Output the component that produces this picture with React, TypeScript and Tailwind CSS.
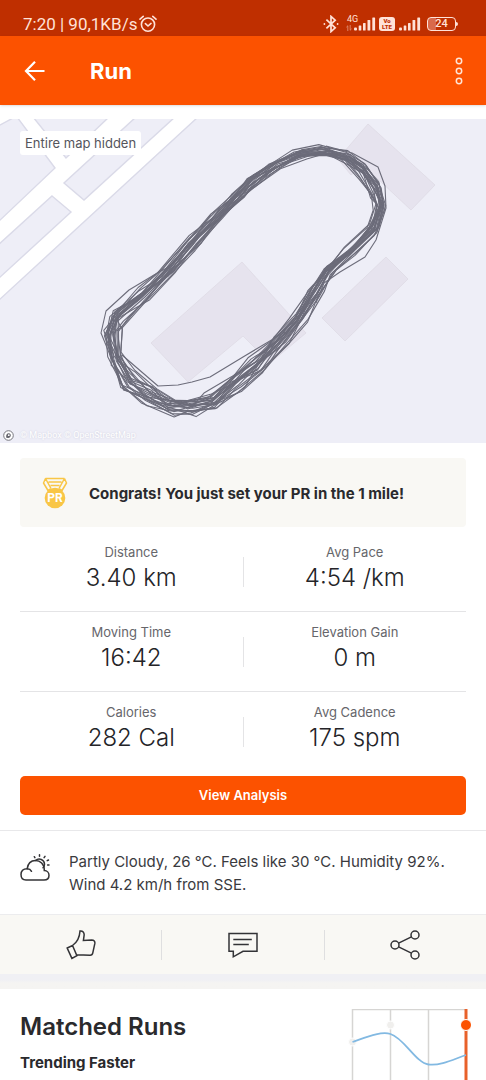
import type { ReactNode } from 'react';

interface Stat {
    label: string;
    value: string;
}

const statRows: Stat[][] = [
    [{ label: 'Distance', value: '3.40 km' }, { label: 'Avg Pace', value: '4:54 /km' }],
    [{ label: 'Moving Time', value: '16:42' }, { label: 'Elevation Gain', value: '0 m' }],
    [{ label: 'Calories', value: '282 Cal' }, { label: 'Avg Cadence', value: '175 spm' }],
];

// outer x, outer y, inner x, inner y around the track
const trackEdges = [
    [187, 119, 199, 129],
    [208, 95, 222, 104],
    [230, 73, 244, 82],
    [250, 56, 260, 65],
    [271, 41, 278, 53],
    [296, 30, 303, 41],
    [323, 26, 326, 39],
    [348, 31, 343, 44],
    [368, 44, 358, 59],
    [381, 65, 369, 76],
    [386, 88, 373, 88],
    [378, 113, 366, 106],
    [358, 136, 344, 128],
    [337, 153, 320, 149],
    [324, 174, 309, 169],
    [309, 205, 288, 196],
    [292, 228, 264, 220],
    [268, 252, 249, 237],
    [243, 274, 228, 255],
    [217, 293, 207, 271],
    [197, 299, 182, 278],
    [172, 299, 170, 273],
    [142, 289, 156, 264],
    [119, 273, 138, 249],
    [106, 244, 124, 233],
    [101, 214, 122, 214],
    [108, 192, 127, 205],
    [134, 170, 151, 183],
    [160, 150, 173, 159],
];

// Each lap keeps roughly to its own lane between the inner and outer edge
function buildLaps(count: number) {
    let seed = 29;
    const random = () => {
        seed = (seed * 16807) % 2147483647;
        return seed / 2147483647;
    };
    const laps: string[] = [];
    for (let lap = 0; lap < count; lap++) {
        const lane = lap / (count - 1);
        const points = trackEdges.map(([ox, oy, ix, iy], i) => {
            const t = lane * 0.6 + random() * 0.4;
            const next = trackEdges[(i + 1) % trackEdges.length];
            const along = (random() - 0.5) * 0.35;
            const x = ox + (ix - ox) * t + (next[0] - ox) * along;
            const y = oy + (iy - oy) * t + (next[1] - oy) * along;
            return `${x.toFixed(1)},${y.toFixed(1)}`;
        });
        laps.push(points.join(' '));
    }
    return laps;
}

const laps = buildLaps(22);

function Signal() {
    return (
        <svg width="22" height="14" viewBox="0 0 22 14" fill="currentColor" aria-hidden="true">
            <rect x="0" y="10.5" width="3" height="3" rx="1" />
            <rect x="4.7" y="8.5" width="2.6" height="5" rx="0.6" />
            <rect x="9" y="6" width="2.6" height="7.5" rx="0.6" />
            <rect x="13.5" y="3" width="2.8" height="10.5" rx="0.6" />
            <rect x="18.3" y="0.5" width="2.8" height="13" rx="0.6" />
        </svg>
    );
}

function StatusBar() {
    return (
        <div className="flex h-9 items-center justify-between bg-[#bf2f00] pt-3 pr-7 pl-[23px] font-[Roboto,sans-serif] text-[#ffe2d8]">
            <div className="flex items-center gap-0.5">
                <span className="text-[17px] leading-5">7:20 | 90,1KB/s</span>
                <svg width="18" height="18" viewBox="0 0 18 18" fill="none" stroke="currentColor" strokeWidth="1.6" strokeLinecap="round" aria-hidden="true">
                    <circle cx="9" cy="9.6" r="6.6" />
                    <path d="M1 4.2 4.2 1.4M17 4.2l-3.2-2.8M6.4 8.6 9 11l3-2.6" />
                </svg>
            </div>
            <div className="flex items-center">
                <svg width="16" height="18" viewBox="0 0 16 18" fill="none" stroke="currentColor" strokeWidth="1.7" aria-hidden="true">
                    <path d="m3.4 4.6 8.8 8.2L8 16.6V1.4l4.2 3.8-8.8 8.2" />
                    <circle cx="1.4" cy="9" r="0.9" fill="currentColor" stroke="none" />
                    <circle cx="14.6" cy="9" r="0.9" fill="currentColor" stroke="none" />
                </svg>
                <div className="relative ml-[15px]">
                    <span className="absolute -top-1 -left-[7px] text-[9px] leading-3">4G</span>
                    <svg className="absolute top-2 -left-2" width="6" height="6" viewBox="0 0 6 6" fill="none" stroke="currentColor" strokeWidth="0.8" opacity="0.6" aria-hidden="true">
                        <path d="M1.8 6V.8L.4 2.2M4.2 0v5.2l1.4-1.4" />
                    </svg>
                    <Signal />
                </div>
                <div className="ml-[3px] flex h-[14px] w-4 flex-col items-center justify-center rounded-[3px] bg-[#ffe2d8] text-[6px] leading-[6px] font-black text-[#bf2f00]">
                    <span>Vo</span>
                    <span>LTE</span>
                </div>
                <div className="ml-1">
                    <Signal />
                </div>
                <div className="ml-[6px] flex items-center">
                    <div className="flex h-[14px] w-[29px] items-center justify-center rounded border border-[#ffe2d8] bg-linear-to-r from-[#d9694a] from-28% to-transparent to-28% text-[11px] leading-3 font-medium">
                        24
                    </div>
                    <span className="h-1 w-0.5 rounded-r bg-[#ffe2d8]" />
                </div>
            </div>
        </div>
    );
}

function Header() {
    return (
        <header className="relative flex h-[69px] items-center bg-[#fc5200] pr-[23px] pl-6 text-white shadow-sm">
            <button type="button" aria-label="Back">
                <svg width="22" height="22" viewBox="0 0 22 22" fill="none" stroke="currentColor" strokeWidth="2.2">
                    <path d="M20.5 11H2.5M11 1.8 2 11l9 9.2" />
                </svg>
            </button>
            <h1 className="ml-11 flex-1 text-[22px] leading-7 font-bold">Run</h1>
            <button type="button" aria-label="More options">
                <svg width="8" height="28" viewBox="0 0 8 28" fill="none" stroke="#ffe4d6" strokeWidth="1.5">
                    <circle cx="4" cy="4" r="2.7" />
                    <circle cx="4" cy="14" r="2.7" />
                    <circle cx="4" cy="24" r="2.7" />
                </svg>
            </button>
        </header>
    );
}

function RouteMap() {
    return (
        <div className="relative mt-[14px]">
            <svg className="block h-auto w-full" viewBox="0 0 486 324" role="img" aria-label="Route map">
                <rect width="486" height="324" fill="#fff" />
                <g fill="#eeeef7" stroke="#dadae8" strokeWidth="1.4">
                    <path d="M198-2-2 182v144h490V-2z" />
                    <path d="M175-2 84 81 64 64l72-66z" />
                    <path d="M33-2 66 39l43-41z" />
                    <path d="m52 77 19 16-73 67v-34z" />
                    <path d="M-2 7 15-2h2l38 51-57 54z" />
                </g>
                <g fill="#e6e3ee" stroke="#dedae5" strokeWidth="0.8">
                    <path d="m368 5 67 61-24 25-48-45-12 10-13-16z" />
                    <path d="m386 138 22 22-63 62-23-23z" />
                    <path d="m242 143 64 71-36 30-27-27-55 46-37-39z" />
                </g>
                <g fill="none" stroke="#6c6c7a" strokeWidth="1.1" strokeLinejoin="round">
                    {laps.map((points, i) => (
                        <polygon key={i} points={points} />
                    ))}
                    <path d="M122 236l36 31 20-1 14-3 18-5 33-20 42-25" />
                    <path d="M326 27 352 34 378 48 385 67 386 89 376 121 365 138 340 153 324 164 316 184" />
                    <path d="M110 236 101 214 106 192 129 171 154 156 172 146" />
                </g>
            </svg>
            <span className="absolute top-3 left-5 rounded-[3px] bg-white px-[5px] text-[13px] leading-6 text-[#55555c]">
                Entire map hidden
            </span>
            <div className="absolute bottom-0.5 left-[3px] flex items-center gap-1.5">
                <svg width="11" height="11" viewBox="0 0 11 11" aria-hidden="true">
                    <circle cx="5.5" cy="5.5" r="4.8" fill="#fff" stroke="#77777f" />
                    <path d="M3.2 7.8c-.4-3 .6-4.6 2.5-4.6a2.1 2.1 0 0 1 1.8 3.2C6.6 8 5 8 3.2 7.8z" fill="#66666e" />
                    <circle cx="5.8" cy="5.2" r="0.9" fill="#fff" />
                </svg>
                <span className="font-[Roboto,sans-serif] text-[9px] leading-3 text-white [text-shadow:0_0_2px_#c9c9d8]">
                    © Mapbox © OpenStreetMap
                </span>
            </div>
        </div>
    );
}

function Medal() {
    return (
        <svg width="26" height="32" viewBox="0 0 26 32" fill="none" stroke="#f9c646" strokeWidth="1.5" strokeLinejoin="round" aria-hidden="true">
            <path d="M3.5 1.5h19M3.5 1.5 1.5 6l4.5 7.5 2.6-1.6M22.5 1.5l2 4.5-4.5 7.5-2.6-1.6M3.5 1.5l5.5 10M22.5 1.5 17 11.5M6.5 5h13M8.5 8.5h9" />
            <circle cx="13" cy="21" r="10.3" fill="#f9c646" stroke="none" />
            <text x="13" y="25" textAnchor="middle" fontSize="12" fontWeight="700" fontFamily="Roboto, sans-serif" fill="#fff" stroke="none">PR</text>
        </svg>
    );
}

function StatCell({ label, value }: Stat) {
    return (
        <div className="flex-1 pb-1.5 text-center">
            <dt className="text-[13px] leading-[18px] text-[#66666b]">{label}</dt>
            <dd className="text-2xl leading-[34px] font-light text-[#242428]">{value}</dd>
        </div>
    );
}

function ActionButton({ label, children }: { label: string; children: ReactNode }) {
    return (
        <button type="button" aria-label={label} className="flex h-[30px] flex-1 items-center justify-center">
            <svg width="30" height="30" viewBox="0 0 30 30" fill="none" stroke="#333336" strokeWidth="1.5">
                {children}
            </svg>
        </button>
    );
}

function TrendChart() {
    return (
        <svg width="124" height="71" viewBox="0 0 124 71" fill="none" role="img" aria-label="Matched runs trend">
            <path d="M5 .5h114M5.5 0v71M43.5 0v71M81.5 0v71" stroke="#d6d5d3" strokeWidth="1.5" />
            <path d="M119 0v71" stroke="#e8612a" strokeWidth="3" />
            <circle cx="5.5" cy="33" r="4" fill="#f0efed" stroke="#fff" />
            <circle cx="43.5" cy="16" r="4" fill="#f0efed" stroke="#fff" />
            <path d="M5.5 33C20 28 34 22 43.5 25 57 29 69 54 81.5 55.5 94 57 107 50 119 46" stroke="#82b9e2" strokeWidth="1.8" />
            <circle cx="119" cy="16" r="5.5" fill="#fc5200" stroke="#fff" />
        </svg>
    );
}

export default function App() {
    return (
        <div className="min-h-screen bg-white font-[Inter,'Noto_Sans_CJK_SC',sans-serif] text-[#2a2a2d]">
            <StatusBar />
            <Header />
            <main>
                <RouteMap />

                <section className="px-5 py-[15px]">
                    <div className="flex h-[69px] items-center rounded bg-[#f9f8f4] pl-[22px]">
                        <Medal />
                        <p className="ml-[21px] pt-0.5 text-[15px] leading-5 font-bold">
                            Congrats! You just set your PR in the 1 mile!
                        </p>
                    </div>

                    <div className="mt-[5px] divide-y divide-[#e4e4e6]">
                        {statRows.map((row) => (
                            <dl key={row[0].label} className="flex h-20 items-center">
                                <StatCell {...row[0]} />
                                <div className="h-[30px] w-px bg-[#e4e4e6]" />
                                <StatCell {...row[1]} />
                            </dl>
                        ))}
                    </div>

                    <button
                        type="button"
                        className="mt-1 block h-[39px] w-full rounded-[5px] bg-[#fc5200] text-[13px] font-semibold text-white"
                    >
                        View Analysis
                    </button>
                </section>

                <section className="flex items-start border-t border-[#e8e8ea] px-5 pt-[19px] pb-[18px]">
                    <svg className="mt-1 shrink-0" width="30" height="28" viewBox="0 0 30 28" fill="none" stroke="#333336" strokeWidth="1.5" strokeLinecap="round" aria-hidden="true">
                        <path d="M6 26h18c3 0 5-2 5-4.8 0-2.6-2-4.6-4.7-4.7C24.5 10 20 6.5 15.5 6.5c-4.3 0-7.6 3-8.3 8.2C3.5 14.8 1 17 1 20.5 1 24 3.2 26 6 26z" />
                        <path d="M7.2 14.7c2 .1 3.5 1 4.3 2.6M15.5 6.5c3.5-3.2 9-.8 9 3.7 0 1.6-.6 2.7-1.5 3.5" />
                        <path d="m14.3 2.7.6 1M19.5.8v1.4M25 2.3l-.9 1.4M28.5 6l-1.3.7M29 11h-1.4" />
                    </svg>
                    <p className="ml-[19px] text-[15px] leading-[23px] text-[#3a3a3e]">
                        Partly Cloudy, 26 ℃. Feels like 30 ℃. Humidity 92%. Wind 4.2 km/h from SSE.
                    </p>
                </section>

                <section className="flex h-[60px] items-center divide-x divide-[#dfdfe0] border-t border-[#ececee] bg-[#f9f8f4]">
                    <ActionButton label="Give kudos">
                        <path d="m1.2 18 5.3-2.5 4.4 10.2-5 2.7zM6.5 15.5c4.5-3 7-6.5 7.5-14.5 2.8-.4 4.400 1.500 4.100 4.300l-.7 5.200 8.300-.4c2.300 0 3.500 1.300 3.100 3.600l-2 9.200c-.3 1.600-1.300 2.400-2.900 2.300l-13-.5" />
                    </ActionButton>
                    <ActionButton label="Comments">
                        <path d="M1 3.5h28v17.8H15L5.3 26.8v-5.500H1zM5.300 9.500h18.500M5.300 14.500h15.500" />
                    </ActionButton>
                    <ActionButton label="Share">
                        <circle cx="5" cy="15" r="4" />
                        <circle cx="25" cy="5" r="4" />
                        <circle cx="25" cy="25" r="4" />
                        <path d="M8.6 13.2 21.4 6.8M8.6 16.8l12.8 6.4" />
                    </ActionButton>
                </section>

                <div className="h-[15px] bg-linear-to-b from-[#f0f0f4] from-40% to-[#f5f4f2] to-60%" />

                <section className="flex items-start justify-between pt-5 pr-[15px] pl-5">
                    <div>
                        <h2 className="text-2xl leading-9 font-semibold">Matched Runs</h2>
                        <p className="mt-2 text-[15px] leading-5 font-bold">Trending Faster</p>
                    </div>
                    <TrendChart />
                </section>
            </main>
        </div>
    );
}
